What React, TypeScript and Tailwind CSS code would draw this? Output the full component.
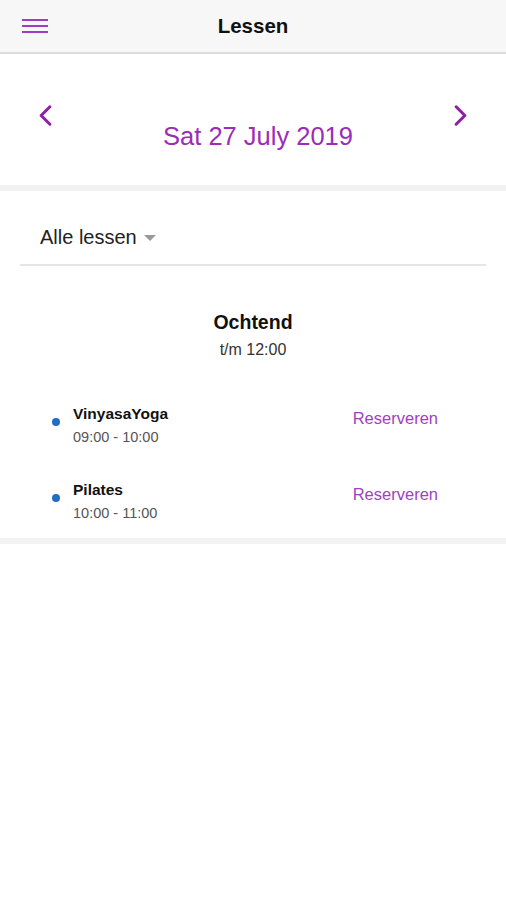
import { ChevronLeft, ChevronRight } from 'lucide-react';

const lessons = [
  { name: 'VinyasaYoga', time: '09:00 - 10:00' },
  { name: 'Pilates', time: '10:00 - 11:00' },
];

export default function App() {
  return (
    <div className="min-h-[900px] bg-white font-['Liberation_Sans',Arial,sans-serif]">
      {/* Header */}
      <div className="relative flex h-[54px] items-center justify-center border-b-2 border-[#dcdcdc] bg-[#f7f7f7]">
        <div className="absolute left-[22px] top-[19px] flex w-[26px] flex-col gap-[4px]">
          <span className="h-[2px] bg-[#a23bc2]" />
          <span className="h-[2px] bg-[#a23bc2]" />
          <span className="h-[2px] bg-[#a23bc2]" />
        </div>
        <h1 className="text-[20.5px] font-bold text-[#111]">Lessen</h1>
      </div>

      {/* Date navigation */}
      <div className="relative h-[131px]">
        <ChevronLeft
          className="absolute left-[28px] top-[44px] h-[35px] w-[35px] text-[#8e1fa8]"
          strokeWidth={2.1}
        />
        <ChevronRight
          className="absolute right-[28px] top-[44px] h-[35px] w-[35px] text-[#8e1fa8]"
          strokeWidth={2.1}
        />
        <p className="pl-[10px] pt-[66px] text-center text-[25.5px] leading-[32px] text-[#9b2cb8]">
          Sat 27 July 2019
        </p>
      </div>
      <div className="h-[6px] bg-[#f2f2f4]" />

      {/* Filter */}
      <div className="px-[20px] pt-[31px]">
        <div className="flex items-center gap-[7px] border-b-2 border-[#e6e6e6] pb-[12px] pl-[20px]">
          <span className="text-[20px] text-[#222]">Alle lessen</span>
          <span className="mt-[2px] h-0 w-0 border-x-[6px] border-t-[6px] border-x-transparent border-t-[#999]" />
        </div>
      </div>

      {/* Morning */}
      <div className="pt-[44px] text-center">
        <p className="text-[19.5px] font-bold leading-[24px] text-[#111]">Ochtend</p>
        <p className="mt-[6px] text-[16px] leading-[20px] text-[#333]">t/m 12:00</p>
      </div>

      <div className="flex flex-col gap-[34px] pt-[44px] pb-[16px]">
        {lessons.map((l) => (
          <div key={l.name} className="flex items-start pl-[52px] pr-[68px]">
            <span className="mt-[14px] h-[8px] w-[8px] rounded-full bg-[#1f6dc4]" />
            <div className="ml-[13px] flex-1">
              <p className="text-[15.5px] font-bold leading-[20px] text-[#111]">{l.name}</p>
              <p className="mt-[4px] text-[14.5px] leading-[18px] text-[#555]">{l.time}</p>
            </div>
            <span className="mt-[4px] text-[16.5px] leading-[20px] text-[#a040c0]">Reserveren</span>
          </div>
        ))}
      </div>
      <div className="h-[6px] bg-[#f2f2f4]" />
    </div>
  );
}
